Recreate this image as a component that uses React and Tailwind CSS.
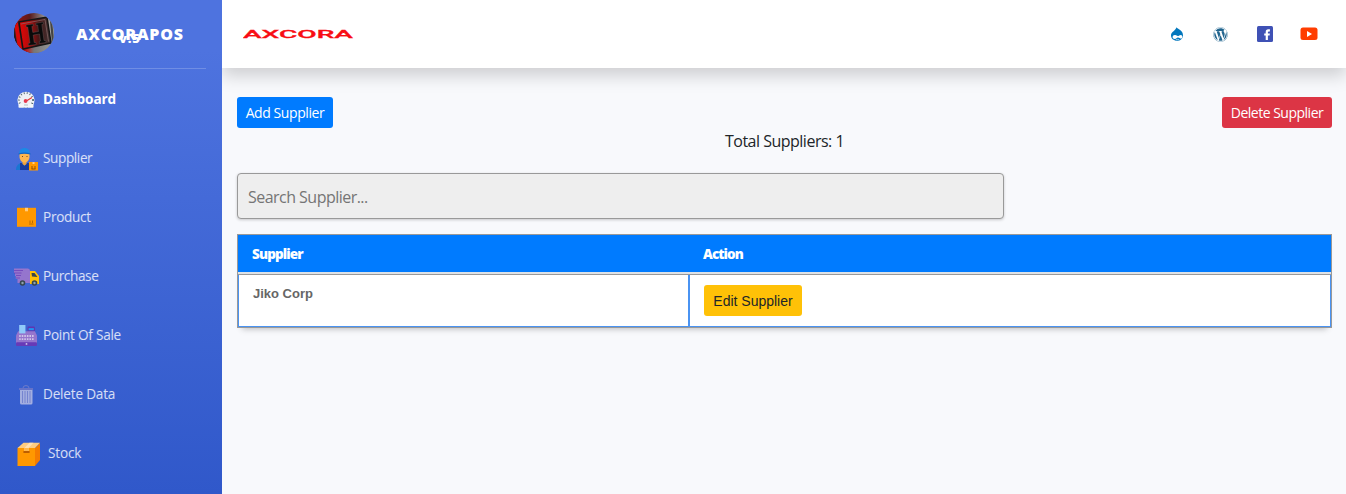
import { FaWordpress } from "react-icons/fa";

function LogoIcon() {
  return (
    <svg className="block size-10" viewBox="0 0 40 40">
      <defs>
        <clipPath id="logoClip"><circle cx="20" cy="20" r="20" /></clipPath>
        <linearGradient id="logoTop" x1="0" y1="0" x2="1" y2="0">
          <stop offset="0" stopColor="#a01010" />
          <stop offset="0.4" stopColor="#5a1c1c" />
          <stop offset="0.75" stopColor="#8c8c8c" />
          <stop offset="1" stopColor="#555" />
        </linearGradient>
        <linearGradient id="logoFace" x1="0" y1="0" x2="1" y2="0">
          <stop offset="0" stopColor="#e00808" />
          <stop offset="0.3" stopColor="#b80a0a" />
          <stop offset="0.6" stopColor="#4a1616" />
          <stop offset="1" stopColor="#3c3434" />
        </linearGradient>
        <linearGradient id="logoBottom" x1="0" y1="0" x2="1" y2="0">
          <stop offset="0" stopColor="#222" />
          <stop offset="0.3" stopColor="#c01010" />
          <stop offset="0.5" stopColor="#777" />
          <stop offset="1" stopColor="#999" />
        </linearGradient>
      </defs>
      <g clipPath="url(#logoClip)">
        <rect width="40" height="40" fill="url(#logoTop)" />
        <path d="M0 10 5 10 9 36 40 30 40 40 0 40z" fill="url(#logoBottom)" />
        <path d="M0 10 4 10 8 36 4 36z" fill="#d80808" />
        <path d="M0 20 5 38 0 38z" fill="#151515" />
        <path d="M33 5 40 8 40 30 37 31z" fill="#a5a5a5" />
        <path d="M36 8 38 8 40 26 38 30z" fill="#444" />
        <path d="M5 9 33 4 37 30 9 36z" fill="url(#logoFace)" stroke="#151515" strokeWidth="1.500" />
        <path d="M7 11 31 6.500 34.500 28.500" fill="none" stroke="#8a6a6a" strokeWidth=".7" />
        <path d="M12 12 19 11 19.300 13 17.800 13.500 18.800 19.500 24.500 18.500 23.700 12 22 12.300 21.800 10.300 29 9 29.500 11 27.800 11.500 30 27.500 31.800 27.500 32 29.500 25.500 30.500 25.200 28.500 26.500 28 25.500 21 19.200 22 20.200 29.500 22 29.500 22.200 31.500 14.500 32.500 14.200 30.500 16 30 13.800 14 12.200 14z" fill="#0a0a0a" stroke="#6a6060" strokeWidth=".4" />
      </g>
    </svg>
  );
}

function DashboardIcon() {
  return (
    <svg className="block h-5 w-5" viewBox="0 0 20 20">
      <path d="M3 17.500V15A8.500 8.500 0 1 1 17 15v2.500z" fill="#eef1f5" />
      <circle cx="10" cy="10" r="7" fill="none" stroke="#455a64" strokeWidth="1.800" strokeDasharray=".9 2.150" />
      <path d="M2.500 14h15v3.500h-15z" fill="#f3f6f9" />
      <path d="m9.500 11.500 6.500-4" stroke="#e53935" strokeWidth="1.300" />
      <circle cx="9.600" cy="11" r="1.900" fill="#e53950" />
      <path d="M8 15h4" stroke="#b0bec5" />
    </svg>
  );
}

function SupplierIcon() {
  return (
    <svg className="block h-6 w-6" viewBox="0 0 24 24">
      <path d="M1 23c0-5 3-6.500 6-7h5c3 .5 5 2 5 7z" fill="#1976d2" />
      <path d="M5 16h2l2.500 3 2.500-3h2v7H5z" fill="#1a3c9c" />
      <path d="M7.500 13h4v4l-2 1.500-2-1.500z" fill="#ef9f3b" />
      <path d="M4.500 6h10v3c0 4-2 6.500-5 6.500s-5-2.500-5-6.500z" fill="#ffb74d" />
      <path d="M4 7c0-4 2-6 5.500-6S15 3 15 7c-3-1-8-1-11 0z" fill="#1e88e5" />
      <path d="M3.500 6.500c4-1.500 8-1.500 12 0v1c-4-1-8-1-12 0z" fill="#1565c0" />
      <path d="M7 9.500h1M11.500 9.500h1" stroke="#6d4c24" />
      <path d="M14 15h9v8.500h-9z" fill="#ff9800" />
      <path d="M17.500 15h2v2h-2z" fill="#ffcc80" />
      <path d="M17 19v3M20 19v3M16.500 22h4" stroke="#8a4b00" strokeWidth=".9" />
    </svg>
  );
}

function ProductIcon() {
  return (
    <svg className="block h-5 w-5" viewBox="0 0 20 20">
      <path d="M0 .8h19v19H0z" fill="#ff9800" />
      <path d="M8 .8h3v3.500H8z" fill="#ffcc80" />
      <path d="M13 13.500v2.500M15.500 13.500v2.500M12 17h4.500" stroke="#a86000" strokeWidth=".8" />
    </svg>
  );
}

function TruckIcon() {
  return (
    <svg className="block h-[18px] w-[26px]" viewBox="0 0 26 18">
      <path d="M0 .5h14Q16 .5 16 3v12H3.500v-4H1.800V8H1V5H0z" fill="#9575cd" />
      <path d="M0 2.500h9M0 5h7.500M2 7.500h5M2 10h4" stroke="#673ab7" strokeWidth=".7" />
      <path d="M16 3h5l4 5v8h-9z" fill="#ffc107" />
      <path d="M17.500 5h3l3 4-5.500-.5z" fill="#37474f" />
      <circle cx="8.500" cy="15" r="2.800" fill="#37474f" /><circle cx="8.500" cy="15" r="1.200" fill="#90a4ae" />
      <circle cx="20.500" cy="15" r="2.800" fill="#37474f" /><circle cx="20.500" cy="15" r="1.200" fill="#90a4ae" />
    </svg>
  );
}

function RegisterIcon() {
  return (
    <svg className="block h-[21px] w-[21px]" viewBox="0 0 20 20">
      <path d="M14 3v5" stroke="#7e57c2" strokeWidth="2" />
      <rect x="11" y="1.500" width="7" height="5" rx="1" fill="#5e35b1" />
      <path d="M12 3h5v2h-5z" fill="#2196f3" />
      <path d="M2 6h16l2 4v8H0v-8z" fill="#9575cd" />
      <path d="M3 0h6v8H3z" fill="#90caf9" />
      <path d="M3 10.500h14M3 13.500h14" stroke="#d1c4e9" strokeWidth="1.800" strokeDasharray="1.500 .95" />
      <rect y="16.500" width="20" height="3.500" rx="1" fill="#673ab7" />
      <circle cx="10" cy="18" r=".9" fill="#d1c4e9" />
    </svg>
  );
}

function TrashIcon() {
  return (
    <svg className="block h-5 w-4" viewBox="0 0 16 20">
      <path d="M5 3Q5 .6 8 .6T11 3" fill="none" stroke="#6f7ccb" strokeWidth="1" />
      <path d="M1 3h14v2H1z" fill="#6673c9" />
      <path d="M2 5h12.500v13q0 1.500-1.500 1.500H3.500Q2 19.500 2 18z" fill="#a3aee0" />
      <path d="M4.500 6v12M7 6v12M9.500 6v12M12 6v12" stroke="#6979cc" strokeWidth=".8" />
    </svg>
  );
}

function StockIcon() {
  return (
    <svg className="block h-6 w-6" viewBox="0 0 24 24">
      <path d="M.5 6H18v18H.5z" fill="#ff9800" />
      <path d="M18 6 23 1v17l-5 6z" fill="#f57c00" />
      <path d="M.5 6 6.500 .8H23L18 6z" fill="#ffcc80" />
      <path d="M7.500 6 12.500 .8h4L11.500 6v3h-4z" fill="#ffe0b2" />
      <path d="M7.500 6h4v3h-4z" fill="#ffb74d" />
      <path d="M7 10h5" stroke="#a64b00" strokeWidth="1.600" strokeLinecap="round" />
    </svg>
  );
}

function DrupalIcon() {
  return (
    <svg className="mr-[29px] size-[14px]" viewBox="0 0 14 14">
      <path d="M6.500 .3C7.500 2.200 13 3.200 13 8.200 13 11.500 10.500 13.800 7 13.800S1 11.500 1 8.300C1 4.800 6 3.500 6.500 .3z" fill="#0277bd" />
      <path d="M2.600 10.200c0-1.500 1.300-2.300 2.600-2.100 1.200.2 1.800 1 2.600 1 1-.1 1.700-1.200 2.900-1.200 1.100 0 1.700.8 1.700 1.900 0 1-.6 1.800-1.400 1.800-1.100 0-2-1.300-3.100-1.200-1.200.1-1.600 1.500-3 1.500-1.300 0-2.300-.6-2.300-1.700z" fill="#fff" />
      <path d="M5.800 12.800q1.700-.8 3.400 0" fill="none" stroke="#fff" strokeWidth=".6" />
    </svg>
  );
}

const menu = [
  { label: "Dashboard", Icon: DashboardIcon, box: "pl-4 w-[43px] pt-0.5", text: "font-bold text-white tracking-[-0.1px]" },
  { label: "Supplier", Icon: SupplierIcon, box: "pl-[15px] w-[43px] pt-0.5", text: "text-white/80 tracking-[-0.4px]" },
  { label: "Product", Icon: ProductIcon, box: "pl-[17px] w-[43px]", text: "text-white/80 tracking-[-0.3px]" },
  { label: "Purchase", Icon: TruckIcon, box: "pl-3.5 w-[43px] pt-0.5", text: "text-white/80 tracking-[-0.4px]" },
  { label: "Point Of Sale", Icon: RegisterIcon, box: "pl-4 w-[43px] pt-0.5", text: "text-white/80 tracking-[-0.25px]" },
  { label: "Delete Data", Icon: TrashIcon, box: "pl-[18px] w-[43px] pt-0.5", text: "text-white/80 tracking-[-0.2px]" },
  { label: "Stock", Icon: StockIcon, box: "pl-[17px] w-[48px] pt-0.5", text: "text-white/80 tracking-[-0.2px]" },
];

function Sidebar() {
  return (
    <aside className="z-10 flex w-[222px] shrink-0 flex-col bg-linear-to-b from-[#4e73df] from-10% to-[#3058ca] to-100%">
      <div className="mx-3.5 flex h-[69px] w-[192px] shrink-0 items-start border-b border-white/20 pt-[13px]">
        <LogoIcon />
        <div className="relative ml-[22px] mt-[11px] text-base leading-5 font-extrabold tracking-[0.75px] text-white">
          AXCORAPOS
          <span className="absolute top-[6px] left-[43px] text-[13px] leading-4">v.5</span>
        </div>
      </div>
      <nav className="flex flex-col">
        {menu.map(({ label, Icon, box, text }) => (
          <a key={label} className="flex h-[59px] items-center">
            <span className={`shrink-0 ${box}`}><Icon /></span>
            <span className={`text-[13.6px] leading-5 whitespace-nowrap ${text}`}>{label}</span>
          </a>
        ))}
      </nav>
    </aside>
  );
}

function Topbar() {
  return (
    <header className="flex h-[68px] shrink-0 items-center justify-between bg-white pr-7 pl-[21px] shadow-[0_8px_16px_rgba(0,0,0,0.17)]">
      <svg className="block h-4 w-28" viewBox="0 0 112 16">
        <text x="0" y="11.500" textLength="110" lengthAdjust="spacingAndGlyphs" fill="#f80c12" stroke="#f80c12" strokeWidth=".3" className="font-['Roboto'] text-[11.5px] font-medium">AXCORA</text>
      </svg>
      <div className="flex items-center">
        <DrupalIcon />
        <FaWordpress className="mr-[29px] size-[15px] text-[#21658f]" />
        <svg className="mr-[27px] size-4" viewBox="0 0 16 16">
          <rect width="16" height="16" rx="1.500" fill="#3f51b5" />
          <path d="M8.700 14V9.500H7.200V7.400h1.500V6q0-2.700 2.600-2.700h1.600v2.100h-1.100q-.9 0-.9.900v1.100h2l-.3 2.100h-1.700V14z" fill="#fff" />
        </svg>
        <svg className="h-[14px] w-[18px]" viewBox="0 0 18 14">
          <rect x=".5" y=".5" width="17" height="12.500" rx="2.500" fill="#ff3d00" />
          <path d="M7 4v6l5-3z" fill="#fff" />
        </svg>
      </div>
    </header>
  );
}

export default function App() {
  return (
    <div className="flex h-[494px] w-[1346px] overflow-hidden bg-[#f8f9fc] font-['Open_Sans','Noto_Sans',sans-serif]">
      <Sidebar />
      <div className="flex min-w-0 flex-1 flex-col">
        <Topbar />
        <main className="flex flex-col pt-[29px] pr-3.5 pl-[15px]">
          <div className="flex justify-between">
            <button className="h-[31px] w-24 rounded-[3px] bg-[#007bff] text-[14px] tracking-[-0.42px] whitespace-nowrap text-white">Add Supplier</button>
            <button className="h-[31px] w-[110px] rounded-[3px] bg-[#dc3545] text-[14px] tracking-[-0.5px] whitespace-nowrap text-white">Delete Supplier</button>
          </div>
          <p className="mt-px text-center text-base leading-6 tracking-[-0.5px] text-[#212529]">Total Suppliers: 1</p>
          <input
            className="mt-5 h-[46px] w-[767px] rounded-[4px] border border-[#999] bg-[#eee] px-2.5 pt-0.5 text-base tracking-[-0.53px] shadow-[0_1px_3px_rgba(0,0,0,0.2)] outline-none placeholder:text-[#757575]"
            placeholder="Search Supplier..."
          />
          <div className="mt-[15px] flex h-[94px] flex-col border border-[#999] bg-white shadow-[0_6px_6px_-5px_rgba(0,0,0,0.25)]">
            <div className="flex h-[37px] shrink-0 items-center bg-[#007bff] pt-0.5 text-[13.5px] font-extrabold text-white">
              <div className="w-[451px] pl-3.5 tracking-[-0.85px]">Supplier</div>
              <div className="pl-3.5 tracking-[-0.9px]">Action</div>
            </div>
            <div className="h-0.5 shrink-0 bg-[#dee2e6]" />
            <div className="flex flex-1 border-t border-t-[#999]">
              <div className="w-[451px] border-r border-b border-l border-[#4a93f2] pt-2.5 pl-3.5 font-['Liberation_Sans',sans-serif] text-[13px] leading-[18px] font-bold text-[#666]">Jiko Corp</div>
              <div className="flex-1 border-r border-b border-l border-[#4a93f2] pt-2.5 pl-3.5">
                <button className="block h-[31px] w-[98px] rounded-[3px] bg-[#ffc107] pt-0.5 font-['Liberation_Sans',sans-serif] text-[14px] whitespace-nowrap text-[#212529]">Edit Supplier</button>
              </div>
            </div>
          </div>
        </main>
      </div>
    </div>
  );
}
